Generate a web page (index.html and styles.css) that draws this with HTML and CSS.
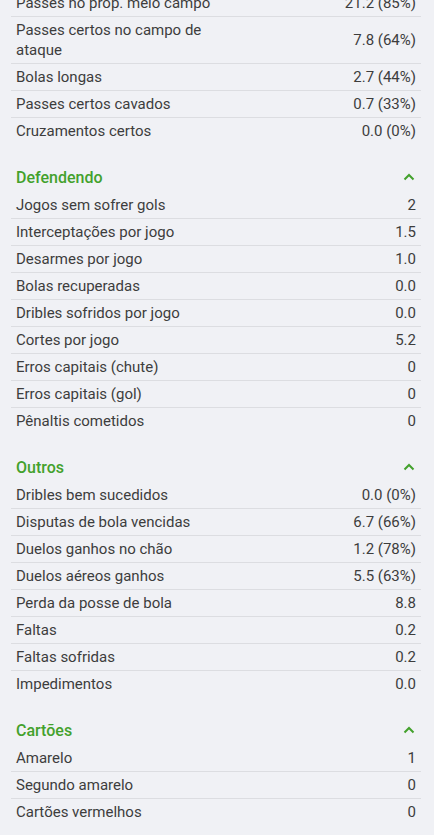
FILE: index.html
```html
<!DOCTYPE html>
<html lang="pt">
<head>
  <meta charset="UTF-8">
  <meta name="viewport" content="width=device-width, initial-scale=1.0">
  <title>Estatísticas do jogador</title>
  <link rel="stylesheet" href="styles.css">
</head>
<body>
  <div class="stats">
    <div class="group first">
      <div class="row"><span class="label">Passes no prop. meio campo</span><span class="value">21.2 (85%)</span></div>
      <div class="row"><span class="label">Passes certos no campo de<br>ataque</span><span class="value">7.8 (64%)</span></div>
      <div class="row"><span class="label">Bolas longas</span><span class="value">2.7 (44%)</span></div>
      <div class="row"><span class="label">Passes certos cavados</span><span class="value">0.7 (33%)</span></div>
      <div class="row"><span class="label">Cruzamentos certos</span><span class="value">0.0 (0%)</span></div>
    </div>

    <div class="group">
      <div class="group-header">
        <h3>Defendendo</h3>
        <svg class="chevron" width="12" height="8" viewBox="0 0 12 8"><path d="M1.5 6.5 L6 2 L10.5 6.5" fill="none" stroke="#43a12c" stroke-width="2"/></svg>
      </div>
      <div class="row"><span class="label">Jogos sem sofrer gols</span><span class="value">2</span></div>
      <div class="row"><span class="label">Interceptações por jogo</span><span class="value">1.5</span></div>
      <div class="row"><span class="label">Desarmes por jogo</span><span class="value">1.0</span></div>
      <div class="row"><span class="label">Bolas recuperadas</span><span class="value">0.0</span></div>
      <div class="row"><span class="label">Dribles sofridos por jogo</span><span class="value">0.0</span></div>
      <div class="row"><span class="label">Cortes por jogo</span><span class="value">5.2</span></div>
      <div class="row"><span class="label">Erros capitais (chute)</span><span class="value">0</span></div>
      <div class="row"><span class="label">Erros capitais (gol)</span><span class="value">0</span></div>
      <div class="row"><span class="label">Pênaltis cometidos</span><span class="value">0</span></div>
    </div>

    <div class="group">
      <div class="group-header">
        <h3>Outros</h3>
        <svg class="chevron" width="12" height="8" viewBox="0 0 12 8"><path d="M1.5 6.5 L6 2 L10.5 6.5" fill="none" stroke="#43a12c" stroke-width="2"/></svg>
      </div>
      <div class="row"><span class="label">Dribles bem sucedidos</span><span class="value">0.0 (0%)</span></div>
      <div class="row"><span class="label">Disputas de bola vencidas</span><span class="value">6.7 (66%)</span></div>
      <div class="row"><span class="label">Duelos ganhos no chão</span><span class="value">1.2 (78%)</span></div>
      <div class="row"><span class="label">Duelos aéreos ganhos</span><span class="value">5.5 (63%)</span></div>
      <div class="row"><span class="label">Perda da posse de bola</span><span class="value">8.8</span></div>
      <div class="row"><span class="label">Faltas</span><span class="value">0.2</span></div>
      <div class="row"><span class="label">Faltas sofridas</span><span class="value">0.2</span></div>
      <div class="row"><span class="label">Impedimentos</span><span class="value">0.0</span></div>
    </div>

    <div class="group">
      <div class="group-header">
        <h3>Cartões</h3>
        <svg class="chevron" width="12" height="8" viewBox="0 0 12 8"><path d="M1.5 6.5 L6 2 L10.5 6.5" fill="none" stroke="#43a12c" stroke-width="2"/></svg>
      </div>
      <div class="row"><span class="label">Amarelo</span><span class="value">1</span></div>
      <div class="row"><span class="label">Segundo amarelo</span><span class="value">0</span></div>
      <div class="row"><span class="label">Cartões vermelhos</span><span class="value">0</span></div>
    </div>
  </div>
</body>
</html>
```

FILE: styles.css
```css
body {
  margin: 0;
  background: #f0f1f5;
  font-family: Roboto, "Liberation Sans", sans-serif;
  color: #3d3d3d;
}

/* list is scrolled a little, first row sits under the top edge */
.stats {
  padding: 0 13px 0 11px;
  margin-top: -10px;
}

.group {
  margin-top: 18px;
}

.group.first {
  margin-top: 0;
}

.group-header {
  display: flex;
  justify-content: space-between;
  align-items: center;
  height: 30px;
  padding: 0 6px 0 5px;
}

.group-header h3 {
  margin: 0;
  font-size: 16px;
  font-weight: 500;
  color: #43a12c;
}

.chevron {
  display: block;
}

.row {
  display: flex;
  justify-content: space-between;
  align-items: center;
  padding: 3px 5px;
  font-size: 15px;
  line-height: 20px;
  border-bottom: 1px solid #dcdde1;
}

.row:last-child {
  border-bottom: none;
}

.value {
  text-align: right;
  white-space: nowrap;
}
```
